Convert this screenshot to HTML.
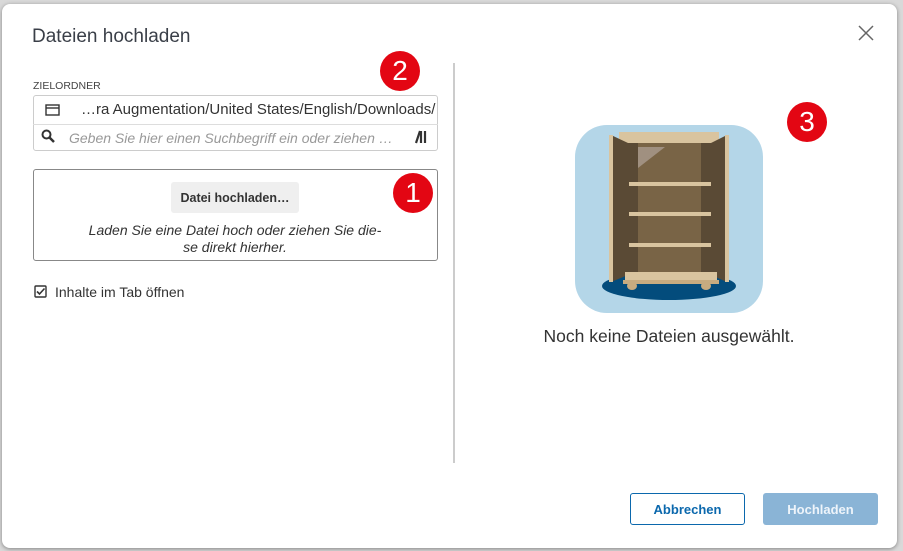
<!DOCTYPE html>
<html><head><meta charset="utf-8"><style>
*{box-sizing:border-box;margin:0;padding:0}
body{width:903px;height:551px;background:#d9d9d9;font-family:"Liberation Sans",Arial,sans-serif;position:relative;overflow:hidden;color:#333}
.dlg{position:absolute;left:2px;top:4px;width:895px;height:544px;background:#fff;border-radius:8px;box-shadow:0 1px 4px rgba(0,0,0,.4)}
.a{position:absolute}
.badge{position:absolute;width:40px;height:40px;border-radius:50%;background:#e30613;color:#fff;font-size:28px;text-align:center;line-height:40px}
.btn{display:flex;align-items:center;justify-content:center;font-size:13px;font-weight:bold;border-radius:3px}
</style></head><body>
<div class="dlg"></div>
<div class="a" style="left:32px;top:26px;font-size:19px;color:#3a3f48">Dateien hochladen</div>
<svg class="a" style="left:858px;top:25px" width="16" height="16"><path d="M1 1L15 15M15 1L1 15" stroke="#666" stroke-width="1.5"/></svg>
<div class="a" style="left:33px;top:80px;font-size:10.5px;color:#444">ZIELORDNER</div>
<div class="a" style="left:33px;top:95px;width:405px;height:56px;border:1px solid #ccc;border-radius:3px"></div>
<div class="a" style="left:33px;top:124px;width:405px;border-top:1px solid #ddd"></div>
<svg class="a" style="left:45px;top:103px" width="16" height="14"><rect x="1" y="2" width="13" height="10" fill="none" stroke="#333" stroke-width="1.4"/><path d="M1 5H14" stroke="#333" stroke-width="1.4"/></svg>
<div class="a" style="left:81px;top:101px;font-size:15px;color:#333;white-space:nowrap">…ra Augmentation/United States/English/Downloads/</div>
<svg class="a" style="left:41px;top:129px" width="14" height="14"><circle cx="5.5" cy="5.5" r="4" fill="none" stroke="#333" stroke-width="2"/><path d="M8.5 8.5L13 13" stroke="#333" stroke-width="2.5"/></svg>
<div class="a" style="left:69px;top:130px;font-size:14px;font-style:italic;color:#999;white-space:nowrap">Geben Sie hier einen Suchbegriff ein oder ziehen …</div>
<svg class="a" style="left:414px;top:130px" width="16" height="14"><path d="M2 13L6 1M7 13V1M11 13V1" stroke="#333" stroke-width="2.2"/></svg>
<div class="a" style="left:33px;top:169px;width:405px;height:92px;border:1px solid #888;border-radius:3px"></div>
<div class="a btn" style="left:171px;top:182px;width:128px;height:31px;background:#efefef;font-size:12.5px;color:#333">Datei hochladen…</div>
<div class="a" style="left:60px;top:222px;width:350px;text-align:center;font-size:14px;font-style:italic;line-height:17px;color:#333">Laden Sie eine Datei hoch oder ziehen Sie die-<br>se direkt hierher.</div>
<svg class="a" style="left:34px;top:285px" width="14" height="14"><rect x="1" y="1" width="11" height="11" rx="1" fill="none" stroke="#333" stroke-width="1.4"/><path d="M3 6.5L5.5 9L10.5 3.5" fill="none" stroke="#333" stroke-width="1.6"/></svg>
<div class="a" style="left:55px;top:284px;font-size:14px;color:#333">Inhalte im Tab öffnen</div>
<div class="a" style="left:453px;top:63px;width:2px;height:400px;background:#ccc"></div>
<svg class="a" style="left:575px;top:125px" width="188" height="188" viewBox="0 0 188 188">
<rect width="188" height="188" rx="32" fill="#b4d6e8"/>
<ellipse cx="94" cy="161" rx="67" ry="14" fill="#034c7c"/>
<rect x="53" y="18" width="83" height="131" fill="#796446"/>
<rect x="44" y="7" width="100" height="11" fill="#d9c49f"/>
<path d="M36 10L53 18V150L36 157Z" fill="#5a4a35"/><path d="M34 10h4v147h-4z" fill="#d9c49f"/>
<path d="M152 10L136 18V150L152 157Z" fill="#5a4a35"/><path d="M150 10h4v147h-4z" fill="#d9c49f"/>
<rect x="53" y="18" width="10" height="131" fill="#5a4a35"/><rect x="126" y="18" width="10" height="131" fill="#5a4a35"/>
<path d="M63 22H90L63 43Z" fill="#a09080"/>
<rect x="54" y="57" width="82" height="4" fill="#d9c49f"/>
<rect x="54" y="87" width="82" height="4" fill="#d9c49f"/>
<rect x="54" y="118" width="82" height="4" fill="#d9c49f"/>
<rect x="50" y="147" width="92" height="10" fill="#d9c49f"/>
<rect x="48" y="155" width="96" height="4" fill="#c7ab80"/>
<ellipse cx="57" cy="161" rx="5" ry="4" fill="#c7ab80"/><ellipse cx="131" cy="161" rx="5" ry="4" fill="#c7ab80"/>
</svg>
<div class="a" style="left:480px;top:326px;width:378px;text-align:center;font-size:17.5px;color:#333">Noch keine Dateien ausgewählt.</div>
<div class="a btn" style="left:630px;top:493px;width:115px;height:32px;border:1.5px solid #0b68ad;color:#0b68ad">Abbrechen</div>
<div class="a btn" style="left:763px;top:493px;width:115px;height:32px;background:#8ab4d6;color:#eef4fa">Hochladen</div>
<div class="badge" style="left:380px;top:51px">2</div>
<div class="badge" style="left:393px;top:173px">1</div>
<div class="badge" style="left:787px;top:102px">3</div>
</body></html>
